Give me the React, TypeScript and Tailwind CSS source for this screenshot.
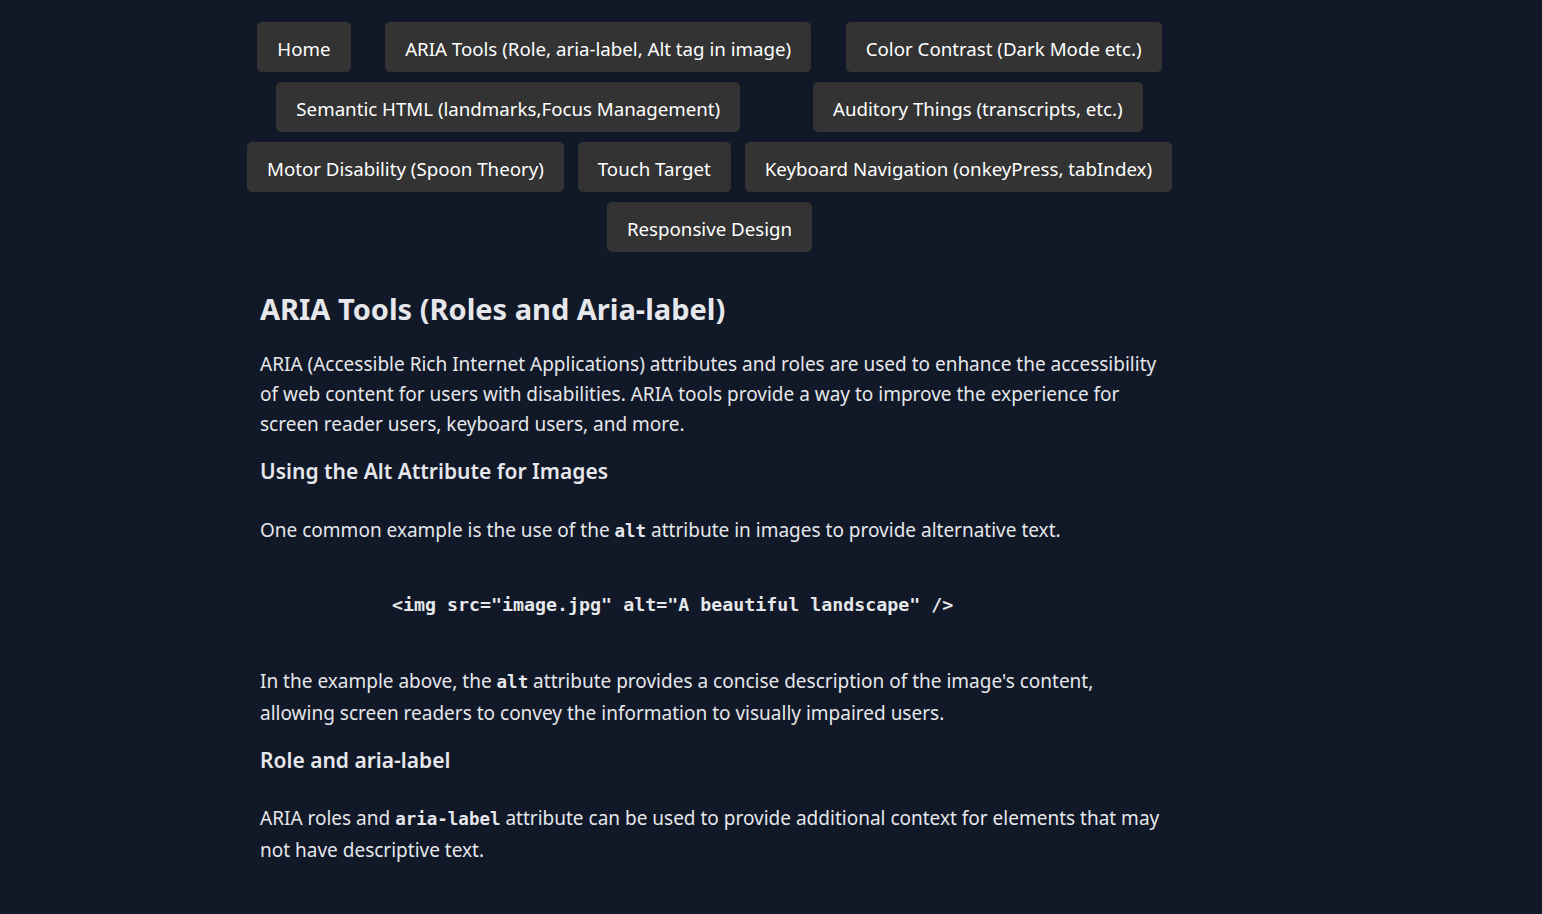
const navItems = [
  "Home",
  "ARIA Tools (Role, aria-label, Alt tag in image)",
  "Color Contrast (Dark Mode etc.)",
  "Semantic HTML (landmarks,Focus Management)",
  "Auditory Things (transcripts, etc.)",
  "Motor Disability (Spoon Theory)",
  "Touch Target",
  "Keyboard Navigation (onkeyPress, tabIndex)",
  "Responsive Design",
];

function Code({ children }: { children: string }) {
  return (
    <code className="font-['DejaVu_Sans_Mono','Liberation_Mono',monospace] text-[17.5px] leading-none font-semibold text-[#e5e7eb]">
      {children}
    </code>
  );
}

export default function App() {
  return (
    <div className="min-h-[914px] bg-[#111827] font-['Noto_Sans',sans-serif] text-[#e5e7eb]">
      <div className="ml-[240px] w-[939px] pt-[17px]">
        <nav className="flex flex-wrap justify-around">
          {navItems.map((item) => (
            <button
              key={item}
              className="mx-[6px] my-[5px] h-[50px] rounded-[5px] bg-[#333333] px-5 pt-1 text-[18.7px] text-white"
            >
              {item}
            </button>
          ))}
        </nav>

        {/* content column */}
        <main className="pl-5 pr-3 pt-[32px]">
          <h1 className="text-[29px] font-bold leading-[40px] text-[#e5e7eb]">
            ARIA Tools (Roles and Aria-label)
          </h1>
          <p className="mt-[20px] text-[19px] leading-[30px]">
            ARIA (Accessible Rich Internet Applications) attributes and roles are used to enhance the
            accessibility of web content for users with disabilities. ARIA tools provide a way to
            improve the experience for screen reader users, keyboard users, and more.
          </p>
          <h2 className="mt-[16px] text-[21px] font-semibold leading-[32px]">
            Using the Alt Attribute for Images
          </h2>
          <p className="mt-[28px] text-[19px] leading-[30px]">
            One common example is the use of the <Code>alt</Code> attribute in images to provide
            alternative text.
          </p>
          <pre className="mt-[45px] pl-[132px] font-['DejaVu_Sans_Mono','Liberation_Mono',monospace] text-[18.3px] font-semibold leading-[30px] text-[#e5e7eb]">
            {'<img src="image.jpg" alt="A beautiful landscape" />'}
          </pre>
          <p className="mt-[45px] text-[19px] leading-[32px]">
            In the example above, the <Code>alt</Code> attribute provides a concise description of the
            image's content, allowing screen readers to convey the information to visually impaired
            users.
          </p>
          <h2 className="mt-[15px] text-[21px] font-semibold leading-[32px]">Role and aria-label</h2>
          <p className="mt-[26px] text-[19px] leading-[32px]">
            ARIA roles and <Code>aria-label</Code> attribute can be used to provide additional
            context for elements that may not have descriptive text.
          </p>
        </main>
      </div>
    </div>
  );
}
